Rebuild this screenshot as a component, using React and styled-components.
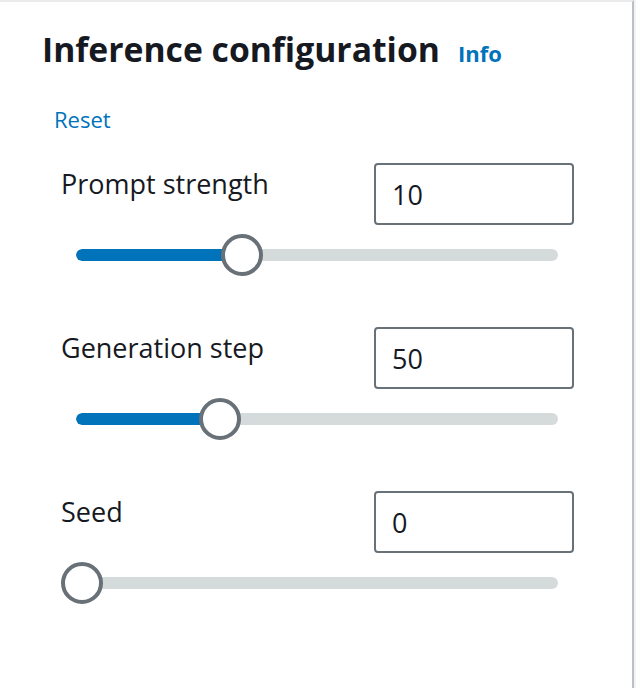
import React from "react";
import styled, { createGlobalStyle } from "styled-components";

const GlobalStyle = createGlobalStyle`
  html, body {
    margin: 0;
    padding: 0;
    background: #f2f3f3;
  }
  body {
    font-family: "Open Sans", "Noto Sans", sans-serif;
    color: #16191f;
  }
`;

const Panel = styled.div`
  box-sizing: border-box;
  width: 634px;
  height: 688px;
  background: #ffffff;
  border-top: 2px solid #e9ebed;
  border-right: 2px solid #bcc0c4;
  padding: 25px 0 0 42px;
`;
const Header = styled.div`
  display: flex;
  align-items: baseline;
  gap: 18px;
`;
const Title = styled.h2`
  margin: 0;
  font-size: 33.7px;
  line-height: 44px;
  font-weight: 700;
  color: #16191f;
`;
const Link = styled.a`
  color: #0073bb;
  font-size: 22px;
  font-weight: ${({ $bold }) => ($bold ? 700 : 400)};
  text-decoration: none;
  cursor: pointer;
`;
const ResetRow = styled.div`
  margin: 33px 0 0 12px;
  line-height: 30px;
`;
const Fields = styled.div`
  display: flex;
  flex-direction: column;
  gap: 51px;
  width: 513px;
  margin: 26px 0 0 19px;
`;
const Field = styled.div`
  display: flex;
  flex-direction: column;
  gap: 9px;
`;
const FieldRow = styled.div`
  display: flex;
  justify-content: space-between;
  align-items: flex-start;
`;
const Label = styled.label`
  margin-top: 2px;
  font-size: 27px;
  color: #16191f;
`;
const NumberInput = styled.input`
  box-sizing: border-box;
  width: 200px;
  height: 62px;
  border: 2px solid #687078;
  border-radius: 4px;
  padding: 0 16px;
  font-family: "Open Sans", "Noto Sans", sans-serif;
  font-size: 27px;
  color: #16191f;
  background: #fff;
  outline: none;
`;
const Slider = styled.div`
  position: relative;
  height: 42px;
  display: flex;
  align-items: center;
`;
const Track = styled.div`
  position: relative;
  flex: 1;
  height: 12px;
  margin: 0 16px 0 15px;
  border-radius: 6px;
  background: #d5dbdb;
  overflow: hidden;
`;
const Fill = styled.div`
  height: 100%;
  background: #0073bb;
  border-radius: 6px 0 0 6px;
`;
const Thumb = styled.div`
  position: absolute;
  top: 0;
  box-sizing: border-box;
  width: 42px;
  height: 42px;
  border-radius: 50%;
  border: 4px solid #687078;
  background: #ffffff;
`;

const TRAVEL = 513 - 42;

const fields = [
  { id: "strength", label: "Prompt strength", value: "10", pos: 0.34 },
  { id: "steps", label: "Generation step", value: "50", pos: 0.294 },
  { id: "seed", label: "Seed", value: "0", pos: 0 },
];

function SliderField({ id, label, value, pos }) {
  const thumbLeft = pos * TRAVEL;
  const fillWidth = thumbLeft + 21 - 15;
  return (
    <Field>
      <FieldRow>
        <Label htmlFor={id}>{label}</Label>
        <NumberInput id={id} type="text" defaultValue={value} />
      </FieldRow>
      <Slider>
        <Track>
          <Fill style={{ width: fillWidth }} />
        </Track>
        <Thumb style={{ left: thumbLeft }} />
      </Slider>
    </Field>
  );
}

export default function App() {
  return (
    <>
      <GlobalStyle />
      <Panel>
        <Header>
          <Title>Inference configuration</Title>
          <Link $bold>Info</Link>
        </Header>
        <ResetRow>
          <Link>Reset</Link>
        </ResetRow>
        <Fields>
          {fields.map((f) => (
            <SliderField key={f.id} {...f} />
          ))}
        </Fields>
      </Panel>
    </>
  );
}
